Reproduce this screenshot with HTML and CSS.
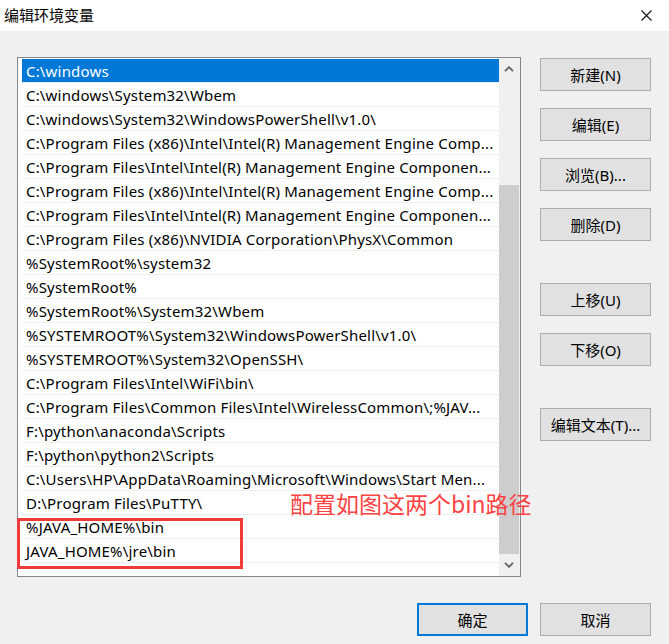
FILE: index.html
```html
<!DOCTYPE html>
<html lang="zh-CN">
<head>
<meta charset="utf-8">
<title>编辑环境变量</title>
<link rel="stylesheet" href="styles.css">
</head>
<body>
<div class="window">
  <div class="titlebar">
    <span class="title">编辑环境变量</span>
    <svg class="close" width="11" height="11" viewBox="0 0 11 11"><path d="M0.5 0.5 L10.5 10.5 M10.5 0.5 L0.5 10.5" stroke="#111" stroke-width="1.1" fill="none"/></svg>
  </div>
  <div class="content">
    <div class="main">
      <div class="listbox">
        <ul class="items">
          <li class="item selected">C:\windows</li>
          <li class="item">C:\windows\System32\Wbem</li>
          <li class="item">C:\windows\System32\WindowsPowerShell\v1.0\</li>
          <li class="item">C:\Program Files (x86)\Intel\Intel(R) Management Engine Comp...</li>
          <li class="item">C:\Program Files\Intel\Intel(R) Management Engine Componen...</li>
          <li class="item">C:\Program Files (x86)\Intel\Intel(R) Management Engine Comp...</li>
          <li class="item">C:\Program Files\Intel\Intel(R) Management Engine Componen...</li>
          <li class="item">C:\Program Files (x86)\NVIDIA Corporation\PhysX\Common</li>
          <li class="item">%SystemRoot%\system32</li>
          <li class="item">%SystemRoot%</li>
          <li class="item">%SystemRoot%\System32\Wbem</li>
          <li class="item">%SYSTEMROOT%\System32\WindowsPowerShell\v1.0\</li>
          <li class="item">%SYSTEMROOT%\System32\OpenSSH\</li>
          <li class="item">C:\Program Files\Intel\WiFi\bin\</li>
          <li class="item">C:\Program Files\Common Files\Intel\WirelessCommon\;%JAV...</li>
          <li class="item">F:\python\anaconda\Scripts</li>
          <li class="item">F:\python\python2\Scripts</li>
          <li class="item">C:\Users\HP\AppData\Roaming\Microsoft\Windows\Start Men...</li>
          <li class="item">D:\Program Files\PuTTY\</li>
          <li class="item">%JAVA_HOME%\bin</li>
          <li class="item">JAVA_HOME%\jre\bin</li>
        </ul>
        <div class="scrollbar">
          <div class="arrow up">
            <svg width="10" height="6" viewBox="0 0 10 6"><path d="M1 5.2 L5 1.2 L9 5.2" stroke="#606060" stroke-width="1.8" fill="none"/></svg>
          </div>
          <div class="track"><div class="thumb"></div></div>
          <div class="arrow down">
            <svg width="10" height="6" viewBox="0 0 10 6"><path d="M1 0.8 L5 4.8 L9 0.8" stroke="#606060" stroke-width="1.8" fill="none"/></svg>
          </div>
        </div>
      </div>
      <div class="side">
        <button class="btn">新建(N)</button>
        <button class="btn">编辑(E)</button>
        <button class="btn">浏览(B)...</button>
        <button class="btn">删除(D)</button>
        <button class="btn group">上移(U)</button>
        <button class="btn">下移(O)</button>
        <button class="btn group">编辑文本(T)...</button>
      </div>
    </div>
    <div class="footer">
      <button class="btn default">确定</button>
      <button class="btn">取消</button>
    </div>
  </div>
  <div class="redbox"></div>
  <div class="note">配置如图这两个bin路径</div>
</div>
</body>
</html>
```
FILE: styles.css
```css
* { box-sizing: border-box; }
html, body {
  margin: 0;
  padding: 0;
  background: #f0f0f0;
}
body {
  font-family: "Noto Sans", "Noto Sans CJK SC", sans-serif;
  font-size: 15px;
  color: #000;
}
.window {
  position: relative;
  width: 669px;
  height: 644px;
  overflow: hidden;
}
.titlebar {
  height: 31px;
  background: #fff;
  display: flex;
  align-items: center;
  padding: 0 17px 2px 4px;
}
.title {
  font-family: "Noto Sans CJK SC", sans-serif;
  font-size: 15px;
  color: #000;
}
.close {
  margin-left: auto;
  margin-top: 1px;
}
.content {
  padding: 26px 18px 0 17px;
}
.main {
  display: flex;
  align-items: flex-start;
}
.listbox {
  width: 504px;
  height: 520px;
  border: 1px solid #828790;
  background: #fff;
  display: flex;
  padding-left: 4px;
}
.items {
  list-style: none;
  margin: 0;
  padding: 1px 0 0 0;
  width: 477px;
}
.item {
  height: 24px;
  line-height: 24px;
  padding-left: 4px;
  border-bottom: 1px solid #efefef;
  white-space: nowrap;
  overflow: hidden;
  letter-spacing: 0.18px;
}
.item.selected {
  background: #0078d7;
  color: #fff;
}
.scrollbar {
  width: 21px;
  background: #f0f0f0;
  display: flex;
  flex-direction: column;
  padding-right: 1px;
}
.arrow {
  display: flex;
  align-items: center;
  justify-content: center;
  height: 22px;
}
.track {
  flex: 1;
  display: flex;
  flex-direction: column;
  justify-content: flex-end;
}
.thumb {
  height: 369px;
  background: #cdcdcd;
}
.side {
  margin-left: 19px;
  padding-top: 1px;
  display: flex;
  flex-direction: column;
  gap: 17px;
}
.btn {
  width: 111px;
  height: 33px;
  background: #e1e1e1;
  border: 1px solid #adadad;
  font-family: "Noto Sans", "Noto Sans CJK SC", sans-serif;
  font-size: 15px;
  color: #000;
  padding: 0 0 1px 0;
  margin: 0;
}
.btn.group {
  margin-top: 25px;
}
.footer {
  display: flex;
  justify-content: flex-end;
  gap: 12px;
  margin-top: 26px;
}
.btn.default {
  border: 2px solid #0078d7;
}
.redbox {
  position: absolute;
  left: 17px;
  top: 518px;
  width: 226px;
  height: 51px;
  border: 3px solid #f03a3a;
}
.note {
  position: absolute;
  left: 290px;
  top: 488px;
  font-family: "Noto Sans CJK SC", sans-serif;
  font-size: 23px;
  line-height: 30px;
  color: #fc4343;
}
```
